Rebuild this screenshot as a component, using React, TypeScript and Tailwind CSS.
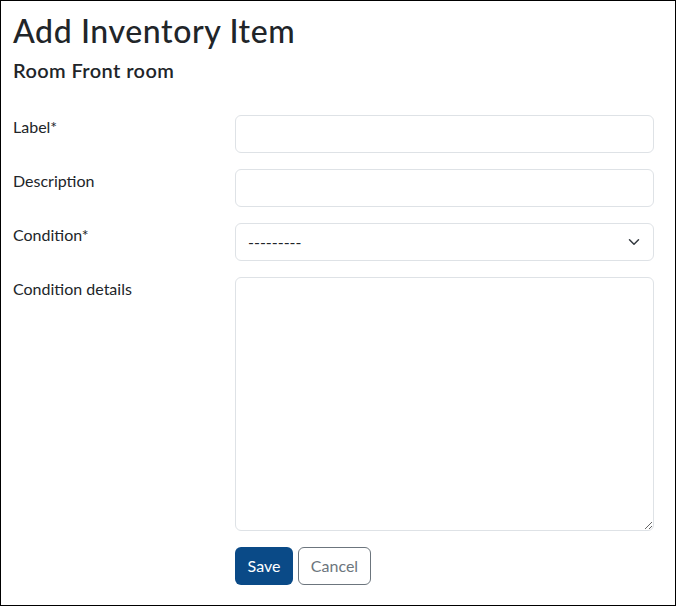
import React, { useState } from 'react';

const inputClass =
  'block w-[419px] h-[38px] rounded-[6px] border border-[#dee2e6] bg-white px-3 text-base text-[#212529] outline-none focus:border-[#86b7fe]';

const conditions = ['---------', 'New', 'Good', 'Fair', 'Poor', 'Damaged'];

export default function App() {
  const [label, setLabel] = useState('');
  const [description, setDescription] = useState('');
  const [condition, setCondition] = useState('---------');
  const [details, setDetails] = useState('');

  return (
    <div
      className="w-[676px] h-[606px] border border-black bg-white px-3 pt-[11px] text-[#212529]"
      style={{ fontFamily: '"Segoe UI", Lato, "Noto Sans", sans-serif' }}
    >
      <h2 className="text-[32px] leading-[1.2] font-medium tracking-[0.6px] mb-2">Add Inventory Item</h2>
      <h5 className="text-[20px] leading-[1.2] font-semibold tracking-[0.4px]">Room Front room</h5>

      <form className="mt-[33px] flex flex-col gap-4" onSubmit={e => e.preventDefault()}>
        <div className="flex">
          <label htmlFor="label" className="w-[222px] text-base leading-6">Label*</label>
          <input id="label" type="text" value={label} onChange={e => setLabel(e.target.value)} className={inputClass} />
        </div>

        <div className="flex">
          <label htmlFor="description" className="w-[222px] text-base leading-6">Description</label>
          <input id="description" type="text" value={description} onChange={e => setDescription(e.target.value)} className={inputClass} />
        </div>

        <div className="flex">
          <label htmlFor="condition" className="w-[222px] text-base leading-6">Condition*</label>
          <div className="relative">
            <select
              id="condition"
              value={condition}
              onChange={e => setCondition(e.target.value)}
              className={inputClass + ' appearance-none pr-9'}
            >
              {conditions.map(c => (
                <option key={c} value={c}>{c}</option>
              ))}
            </select>
            <svg
              className="pointer-events-none absolute right-[13px] top-[13px]"
              width="14"
              height="12"
              viewBox="0 0 16 16"
              fill="none"
              stroke="#343a40"
              strokeWidth="2"
              strokeLinecap="round"
              strokeLinejoin="round"
              aria-hidden="true"
            >
              <path d="m2 5 6 6 6-6" />
            </svg>
          </div>
        </div>

        <div className="flex">
          <label htmlFor="details" className="w-[222px] text-base leading-6">Condition details</label>
          <textarea
            id="details"
            value={details}
            onChange={e => setDetails(e.target.value)}
            className="block w-[419px] h-[254px] rounded-[6px] border border-[#dee2e6] bg-white px-3 py-1.5 text-base outline-none"
          />
        </div>

        <div className="flex pl-[222px] gap-[5px]">
          <button
            type="submit"
            className="h-[38px] w-[58px] rounded-[6px] bg-[#0a4a87] text-base text-white"
          >
            Save
          </button>
          <button
            type="button"
            className="h-[38px] w-[73px] rounded-[6px] border border-[#6c757d] bg-white text-base text-[#6c757d]"
          >
            Cancel
          </button>
        </div>
      </form>
    </div>
  );
}
